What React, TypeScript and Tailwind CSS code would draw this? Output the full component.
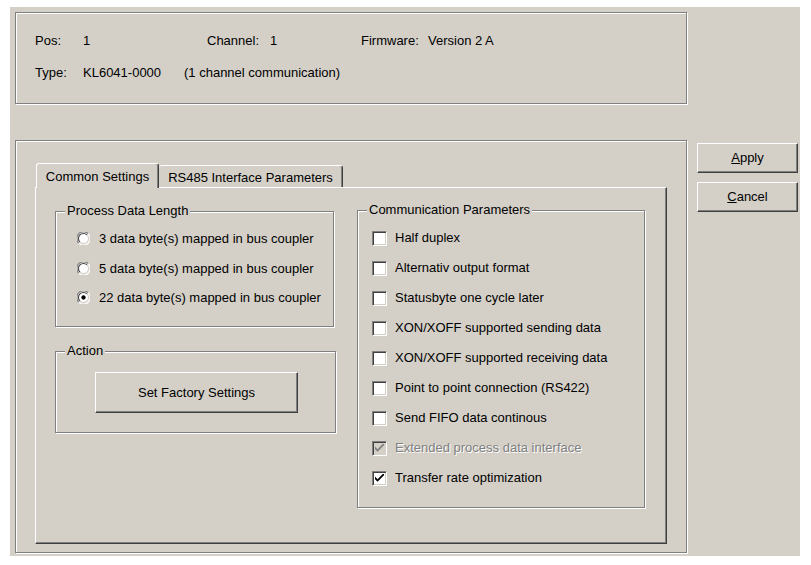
import React from "react";

const etched = "border border-[#808080] shadow-[inset_1px_1px_0_#ffffff,1px_1px_0_#ffffff]";

function GroupBox({ title, className, children }: { title: string; className: string; children: React.ReactNode }) {
  return (
    <div className={`relative ${etched} ${className}`}>
      <span className="absolute -top-[9px] left-[9px] bg-[#d4d0c8] px-[2px] leading-[16px]">{title}</span>
      {children}
    </div>
  );
}

function Radio({ checked, label }: { checked?: boolean; label: string }) {
  return (
    <div className="flex h-[29.5px] items-center">
      <svg width="13" height="13" viewBox="0 0 12 12" className="ml-[21px] mr-[9px] shrink-0">
        <circle cx="6" cy="6" r="5.5" fill="#ffffff" />
        <path d="M1.6 10.4 A5.5 5.5 0 0 1 10.4 1.6" stroke="#808080" strokeWidth="1" fill="none" />
        <path d="M2.7 9.3 A4.5 4.5 0 0 1 9.3 2.7" stroke="#404040" strokeWidth="1" fill="none" />
        <path d="M10.4 1.6 A5.5 5.5 0 0 1 1.6 10.4" stroke="#ffffff" strokeWidth="1" fill="none" />
        <path d="M9.3 2.7 A4.5 4.5 0 0 1 2.7 9.3" stroke="#d4d0c8" strokeWidth="1" fill="none" />
        {checked && <circle cx="6" cy="6" r="2" fill="#000000" />}
      </svg>
      <span>{label}</span>
    </div>
  );
}

function Check({ checked, disabled, label }: { checked?: boolean; disabled?: boolean; label: string }) {
  return (
    <div className="flex h-[30px] items-center">
      <div
        className={`ml-[14px] mr-[8px] flex h-[15px] w-[15px] shrink-0 items-center justify-center border border-t-[#808080] border-l-[#808080] border-b-white border-r-white shadow-[inset_1px_1px_0_#404040,inset_-1px_-1px_0_#d4d0c8] ${
          disabled ? "bg-[#d4d0c8]" : "bg-white"
        }`}
      >
        {checked && (
          <svg width="9" height="9" viewBox="0 0 7 7">
            <path d="M0 2 L0 4 L2 6 L7 1 L7 -1 L2 4 Z" fill={disabled ? "#808080" : "#000000"} />
          </svg>
        )}
      </div>
      <span className={disabled ? "text-[#808080] [text-shadow:1px_1px_0_#ffffff]" : ""}>{label}</span>
    </div>
  );
}

function Button({ className, children }: { className: string; children: React.ReactNode }) {
  return (
    <div
      className={`flex items-center justify-center bg-[#d4d0c8] border border-t-white border-l-white border-b-[#404040] border-r-[#404040] shadow-[inset_-1px_-1px_0_#808080] ${className}`}
    >
      {children}
    </div>
  );
}

export default function App() {
  return (
    <div className="h-[565px] w-[811px] bg-white pl-[10px] pt-[7px] font-['Liberation_Sans',Arial,sans-serif] text-[13px] text-black">
      <div className="flex h-[549px] w-[790px] bg-[#d4d0c8] pl-[5px] pt-[5px]">
        {/* LEFT COLUMN */}
        <div className="flex w-[672px] flex-col">
          {/* HEADER INFO */}
          <div className={`${etched} h-[92px] pl-[19px] pt-[19px]`}>
            <div className="flex h-[18px] items-center">
              <span className="w-[48px]">Pos:</span>
              <span className="w-[124px]">1</span>
              <span className="w-[63px]">Channel:</span>
              <span className="w-[91px]">1</span>
              <span className="w-[67px]">Firmware:</span>
              <span>Version 2 A</span>
            </div>
            <div className="mt-[14px] flex h-[18px] items-center">
              <span className="w-[48px]">Type:</span>
              <span className="w-[101px]">KL6041-0000</span>
              <span>(1 channel communication)</span>
            </div>
          </div>

          {/* SETTINGS PANEL */}
          <div className={`${etched} mt-[36px] h-[413px] pl-[19px] pt-[22px]`}>
            {/* TABS */}
            <div className="flex h-[24px] items-end pl-[1px]">
              <div className="relative z-10 -mb-px flex h-[25px] w-[123px] items-center justify-center rounded-t-[3px] border-l border-t border-r border-l-white border-t-white border-r-[#404040] bg-[#d4d0c8] pt-[2px] shadow-[inset_-1px_0_0_#808080]">
                Common Settings
              </div>
              <div className="flex h-[22px] w-[184px] items-center justify-center rounded-t-[3px] border-t border-r border-t-white border-r-[#404040] pt-[3px] shadow-[inset_-1px_0_0_#808080]">
                RS485 Interface Parameters
              </div>
            </div>

            {/* TAB PAGE */}
            <div className="flex h-[357px] w-[632px] border border-t-white border-l-white border-b-[#404040] border-r-[#404040] shadow-[inset_-1px_-1px_0_#808080]">
              <div className="ml-[19px] mt-[23px] flex flex-col">
                <GroupBox title="Process Data Length" className="h-[116px] w-[279px] pt-[12px]">
                  <Radio label="3 data byte(s) mapped in bus coupler" />
                  <Radio label="5 data byte(s) mapped in bus coupler" />
                  <Radio checked label="22 data byte(s) mapped in bus coupler" />
                </GroupBox>
                <GroupBox title="Action" className="mt-[24px] h-[82px] w-[281px] pl-[39px] pt-[20px]">
                  <Button className="h-[41px] w-[203px]">Set Factory Settings</Button>
                </GroupBox>
              </div>
              <div className="ml-[21px] mt-[22px]">
                <GroupBox title="Communication Parameters" className="h-[298px] w-[288px] pt-[12px]">
                  <Check label="Half duplex" />
                  <Check label="Alternativ output format" />
                  <Check label="Statusbyte one cycle later" />
                  <Check label="XON/XOFF supported sending data" />
                  <Check label="XON/XOFF supported receiving data" />
                  <Check label="Point to point connection (RS422)" />
                  <Check label="Send FIFO data continous" />
                  <Check checked disabled label="Extended process data interface" />
                  <Check checked label="Transfer rate optimization" />
                </GroupBox>
              </div>
            </div>
          </div>
        </div>

        {/* RIGHT COLUMN */}
        <div className="ml-[10px] mt-[131px] flex flex-col gap-[9px]">
          <Button className="h-[30px] w-[101px]">
            <span>
              <span className="underline underline-offset-1">A</span>pply
            </span>
          </Button>
          <Button className="h-[30px] w-[101px]">
            <span>
              <span className="underline underline-offset-1">C</span>ancel
            </span>
          </Button>
        </div>
      </div>
    </div>
  );
}
